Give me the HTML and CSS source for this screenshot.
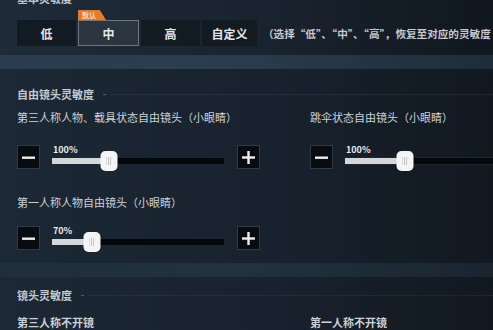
FILE: index.html
```html
<!DOCTYPE html>
<html lang="zh">
<head>
  <meta charset="UTF-8" />
  <title>灵敏度设置</title>
  <link rel="stylesheet" href="styles.css">
</head>
<body>
  <div class="screen">
    <div class="top">
      <div class="cut-title">基本灵敏度</div>

      <div class="preset-row">
        <div class="preset">
          <button class="seg">低</button>
          <button class="seg active">中<span class="tag">默认</span></button>
          <button class="seg">高</button>
          <button class="seg custom">自定义</button>
        </div>
        <div class="hint">（选择“低”、“中”、“高”，恢复至对应的灵敏度</div>
      </div>
    </div>

    <div class="band"></div>

    <div class="section">
      <div class="heading">自由镜头灵敏度</div>

      <div class="cols">
        <div class="col">
          <div class="label">第三人称人物、载具状态自由镜头（小眼睛）</div>
          <div class="ctrl">
            <button class="sq"><svg width="13" height="13" viewBox="0 0 13 13"><rect x="0" y="5.5" width="13" height="2.4" fill="#eee"/></svg></button>
            <div class="slider">
              <div class="pct">100%</div>
              <div class="track">
                <div class="fill" style="width: 33%"></div>
                <div class="thumb" style="left: 33%"></div>
              </div>
            </div>
            <button class="sq plus"><svg width="13" height="13" viewBox="0 0 13 13"><rect x="0" y="5.3" width="13" height="2.4" fill="#eee"/><rect x="5.3" y="0" width="2.4" height="13" fill="#eee"/></svg></button>
          </div>
        </div>

        <div class="col">
          <div class="label">跳伞状态自由镜头（小眼睛）</div>
          <div class="ctrl">
            <button class="sq"><svg width="13" height="13" viewBox="0 0 13 13"><rect x="0" y="5.5" width="13" height="2.4" fill="#eee"/></svg></button>
            <div class="slider">
              <div class="pct">100%</div>
              <div class="track">
                <div class="fill" style="width: 30%"></div>
                <div class="thumb" style="left: 30%"></div>
              </div>
            </div>
          </div>
        </div>

        <div class="col">
          <div class="label">第一人称人物自由镜头（小眼睛）</div>
          <div class="ctrl">
            <button class="sq"><svg width="13" height="13" viewBox="0 0 13 13"><rect x="0" y="5.5" width="13" height="2.4" fill="#eee"/></svg></button>
            <div class="slider">
              <div class="pct">70%</div>
              <div class="track">
                <div class="fill" style="width: 23%"></div>
                <div class="thumb" style="left: 23%"></div>
              </div>
            </div>
            <button class="sq plus"><svg width="13" height="13" viewBox="0 0 13 13"><rect x="0" y="5.3" width="13" height="2.4" fill="#eee"/><rect x="5.3" y="0" width="2.4" height="13" fill="#eee"/></svg></button>
          </div>
        </div>
      </div>
    </div>

    <div class="band band2"></div>

    <div class="section lower">
      <div class="heading">镜头灵敏度</div>
      <div class="cols">
        <div class="label">第三人称不开镜</div>
        <div class="label">第一人称不开镜</div>
      </div>
    </div>
  </div>
</body>
</html>
```

FILE: styles.css
```css
body {
  margin: 0;
  background: #141c25;
  font-family: "Noto Sans CJK SC", "Noto Sans", sans-serif;
  color: #cfd3d7;
}

.screen {
  width: 493px;
  height: 330px;
  overflow: hidden;
  background: linear-gradient(90deg, #1c2835 0%, #18222e 55%, #111820 100%);
}

.top {
  height: 63px;
  background: linear-gradient(90deg, #1e2b38 0%, #1a2430 50%, #10171e 100%);
}

.cut-title {
  font-size: 11px;
  line-height: 12px;
  margin-top: -8px;
  padding-left: 17px;
  color: #c0c6cc;
  font-weight: bold;
}

.preset-row {
  display: flex;
  align-items: center;
  margin-top: 16px;
  padding-left: 17px;
  white-space: nowrap;
}

.preset {
  display: flex;
  gap: 2px;
}

.seg {
  position: relative;
  width: 59px;
  height: 26px;
  padding: 0;
  border: 1px solid transparent;
  background: #121a22;
  color: #e4e6e8;
  font-family: inherit;
  font-size: 12px;
  font-weight: bold;
}

.seg.active {
  width: 61px;
  background: #2a3540;
  border-color: #6c7681;
}

.seg.custom {
  width: 55px;
}

.tag {
  position: absolute;
  left: -1px;
  top: -11px;
  width: 28px;
  height: 10px;
  background: #ea7b26;
  color: #fff;
  font-size: 7px;
  line-height: 10px;
  font-weight: normal;
  text-align: left;
  padding-left: 4px;
  box-sizing: border-box;
  clip-path: polygon(0 0, 78% 0, 100% 100%, 0 100%);
}

.hint {
  margin-left: 6px;
  font-size: 10.6px;
  color: #c6cad0;
  font-weight: bold;
}

.band {
  height: 14px;
  background: linear-gradient(90deg, #2a3c4d 0%, #2b3e50 40%, #1f2d3b 100%);
}

.band2 {
  height: 14px;
  margin-top: 13px;
  background: linear-gradient(90deg, #1f2e3c 0%, #22313f 50%, #1a2530 100%);
}

.section {
  padding-left: 17px;
}

.heading {
  display: flex;
  align-items: center;
  font-size: 11px;
  line-height: 16px;
  margin-top: 17px;
  color: #c4c9ce;
  font-weight: bold;
}

.heading::after {
  content: "";
  flex: 1;
  height: 1px;
  margin-left: 9px;
  background: linear-gradient(90deg, #55606a 0, #55606a 3px, transparent 3px, transparent 7px, rgba(120, 135, 150, 0.12) 7px);
}

.cols {
  display: grid;
  grid-template-columns: 293px 1fr;
}

.col {
  display: flex;
  flex-direction: column;
}

.label {
  font-size: 11px;
  line-height: 16px;
  margin-top: 7px;
  color: #cdd1d5;
  white-space: nowrap;
}

.ctrl {
  display: flex;
  align-items: flex-start;
  margin-top: 20px;
  height: 24px;
}

.col:nth-child(3) .label {
  margin-top: 25px;
}

.col:nth-child(3) .ctrl {
  margin-top: 16px;
}

.sq {
  width: 23px;
  height: 24px;
  padding: 0;
  display: flex;
  align-items: center;
  justify-content: center;
  background: #080c10;
  border: 1px solid #2f3a45;
}

.slider {
  width: 172px;
  margin-left: 12px;
}

.col:nth-child(2) .slider {
  width: 200px;
}

.pct {
  font-size: 9px;
  line-height: 10px;
  height: 10px;
  font-weight: bold;
  color: #e8eaec;
  padding-left: 1px;
}

.track {
  position: relative;
  height: 6px;
  margin-top: 3px;
  background: #05080b;
  box-shadow: 0 0 0 1px #1d2630;
}

.fill {
  height: 100%;
  background: #d4d7da;
}

.thumb {
  position: absolute;
  top: -7px;
  width: 17px;
  height: 20px;
  border-radius: 5px;
  background: #f4f4f4;
  transform: translateX(-50%);
}

.thumb::after {
  content: "";
  position: absolute;
  left: 6px;
  top: 6px;
  width: 5px;
  height: 8px;
  background: repeating-linear-gradient(90deg, #c4c4c4 0, #c4c4c4 1px, transparent 1px, transparent 2px);
}

.plus {
  margin-left: 13px;
}

.lower .heading {
  margin-top: 10px;
}

.lower .label {
  margin-top: 11px;
  font-weight: bold;
}
```
